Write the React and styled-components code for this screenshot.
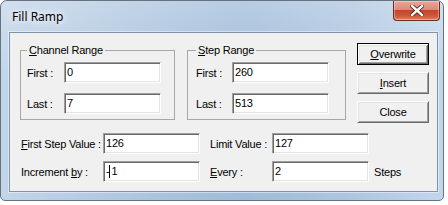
import React from 'react'
import styled, { createGlobalStyle } from 'styled-components'

const Global = createGlobalStyle`
    body {
        margin: 0;
        background: #fff;
        font-family: "Liberation Sans", Arial, sans-serif;
        font-size: 11px;
        color: #000;
    }
`

const Window = styled.div`
    width: 444px;
    height: 201px;
    box-sizing: border-box;
    border: 1px solid #66737f;
    border-radius: 7px 7px 5px 5px;
    background:
        linear-gradient(180deg, rgba(255,255,255,0.25) 0%, rgba(255,255,255,0) 40%),
        linear-gradient(90deg, #c2d5e9 0%, #aec6df 30%, #9fbcda 55%, #aec6e0 80%, #c2d6eb 100%);
    overflow: hidden;
`

const TitleBar = styled.div`
    height: 31px;
    display: flex;
    align-items: flex-start;
    padding: 0 3px 0 11px;
`

const Title = styled.div`
    font-family: "Noto Sans", "Open Sans", sans-serif;
    font-size: 12px;
    line-height: 31px;
    color: #000;
    text-shadow: 0 0 6px #fff, 0 0 10px #fff;
`

const CloseButton = styled.div`
    margin-left: auto;
    width: 47px;
    height: 20px;
    box-sizing: border-box;
    border: 1px solid #6b2c22;
    border-top: none;
    border-radius: 0 0 4px 4px;
    background:
        linear-gradient(180deg, #e9a797 0%, #dd8a76 45%, #c7432c 50%, #cf5a3c 80%, #e0836a 100%);
    box-shadow: inset 0 0 0 1px rgba(255,255,255,0.35);
    display: flex;
    align-items: center;
    justify-content: center;
`

const Frame = styled.div`
    padding: 0 5px 8px 8px;
`

const Client = styled.div`
    height: 160px;
    box-sizing: border-box;
    border: 1px solid #8193a8;
    background: #f0f0f0;
    padding: 10px 0 0 10px;
    box-shadow: 0 0 0 1px rgba(255,255,255,0.45);
    letter-spacing: -0.2px;
`

const TopRow = styled.div`
    display: flex;
    align-items: flex-start;
`

const Group = styled.fieldset`
    margin: 1px ${p => p.$gap}px 0 0;
    width: ${p => p.$width}px;
    box-sizing: border-box;
    border: 1px solid #a7a7a7;
    padding: 5px ${p => p.$right}px 5px ${p => p.$left}px;
    display: flex;
    flex-direction: column;
    gap: 10px;
    min-width: 0;
`

const Legend = styled.legend`
    padding: 0 2px;
    line-height: 13px;
`

const Row = styled.div`
    display: flex;
    align-items: center;
    height: 21px;
`

const Label = styled.span`
    width: ${p => p.$width}px;
    flex: none;
    white-space: nowrap;
`

const Field = styled.div`
    width: 97px;
    height: 21px;
    flex: none;
    box-sizing: border-box;
    background: #fff;
    border: 1px solid;
    border-color: #a0a0a0 #fff #fff #a0a0a0;
    box-shadow: inset 1px 1px #696969, inset -1px -1px #e3e3e3;
    padding: 0 0 0 2px;
    line-height: 19px;
    display: flex;
    align-items: center;
`

const Caret = styled.span`
    display: inline-block;
    width: 1px;
    height: 13px;
    background: #000;
    margin: 0 1px 0 0;
`

const Buttons = styled.div`
    display: flex;
    flex-direction: column;
    gap: 7px;
`

const Button = styled.div`
    width: 72px;
    height: 22px;
    box-sizing: border-box;
    display: flex;
    align-items: center;
    justify-content: center;
    background: #f0f0f0;
    border: 1px solid;
    border-color: ${p => p.$default ? '#000' : '#fff #696969 #696969 #fff'};
    box-shadow: ${p => p.$default
        ? 'inset 1px 1px #fff, inset -1px -1px #696969, inset 2px 2px #e3e3e3, inset -2px -2px #a0a0a0'
        : 'inset 1px 1px #e3e3e3, inset -1px -1px #a0a0a0'};
`

const Bottom = styled.div`
    margin: 10px 0 0 1px;
    display: grid;
    grid-template-columns: 82px 97px 72px 97px auto;
    row-gap: 7px;
    align-items: center;
`

const BottomLabel = styled.span`
    white-space: nowrap;
    padding-left: ${p => p.$indent || 0}px;
`

const Steps = styled.span`
    margin-left: 5px;
`

const CloseGlyph = () => (
    <svg width="14" height="11" viewBox="0 0 14 11">
        <path d="M2 1 L12 10 M12 1 L2 10" stroke="#5a2119" strokeWidth="4.2" strokeLinecap="square" />
        <path d="M2 1 L12 10 M12 1 L2 10" stroke="#fff" strokeWidth="2.4" strokeLinecap="square" />
    </svg>
)

const App = () => {
    return (
        <>
            <Global />
            <Window>
                <TitleBar>
                    <Title>Fill Ramp</Title>
                    <CloseButton><CloseGlyph /></CloseButton>
                </TitleBar>
                <Frame>
                    <Client>
                        <TopRow>
                            <Group $width={155} $left={6} $right={13} $gap={12}>
                                <Legend><u>C</u>hannel Range</Legend>
                                <Row>
                                    <Label $width={37}>First :</Label>
                                    <Field>0</Field>
                                </Row>
                                <Row>
                                    <Label $width={37}>Last :</Label>
                                    <Field>7</Field>
                                </Row>
                            </Group>
                            <Group $width={159} $left={8} $right={16} $gap={11}>
                                <Legend><u>S</u>tep Range</Legend>
                                <Row>
                                    <Label $width={36}>First :</Label>
                                    <Field>260</Field>
                                </Row>
                                <Row>
                                    <Label $width={36}>Last :</Label>
                                    <Field>513</Field>
                                </Row>
                            </Group>
                            <Buttons>
                                <Button $default><span><u>O</u>verwrite</span></Button>
                                <Button><span><u>I</u>nsert</span></Button>
                                <Button>Close</Button>
                            </Buttons>
                        </TopRow>
                        <Bottom>
                            <BottomLabel><u>F</u>irst Step Value :</BottomLabel>
                            <Field>126</Field>
                            <BottomLabel $indent={10}>Limit Value :</BottomLabel>
                            <Field>127</Field>
                            <span />
                            <BottomLabel>Increment <u>b</u>y :</BottomLabel>
                            <Field>-<Caret />1</Field>
                            <BottomLabel $indent={10}><u>E</u>very :</BottomLabel>
                            <Field>2</Field>
                            <Steps>Steps</Steps>
                        </Bottom>
                    </Client>
                </Frame>
            </Window>
        </>
    )
}

export default App
